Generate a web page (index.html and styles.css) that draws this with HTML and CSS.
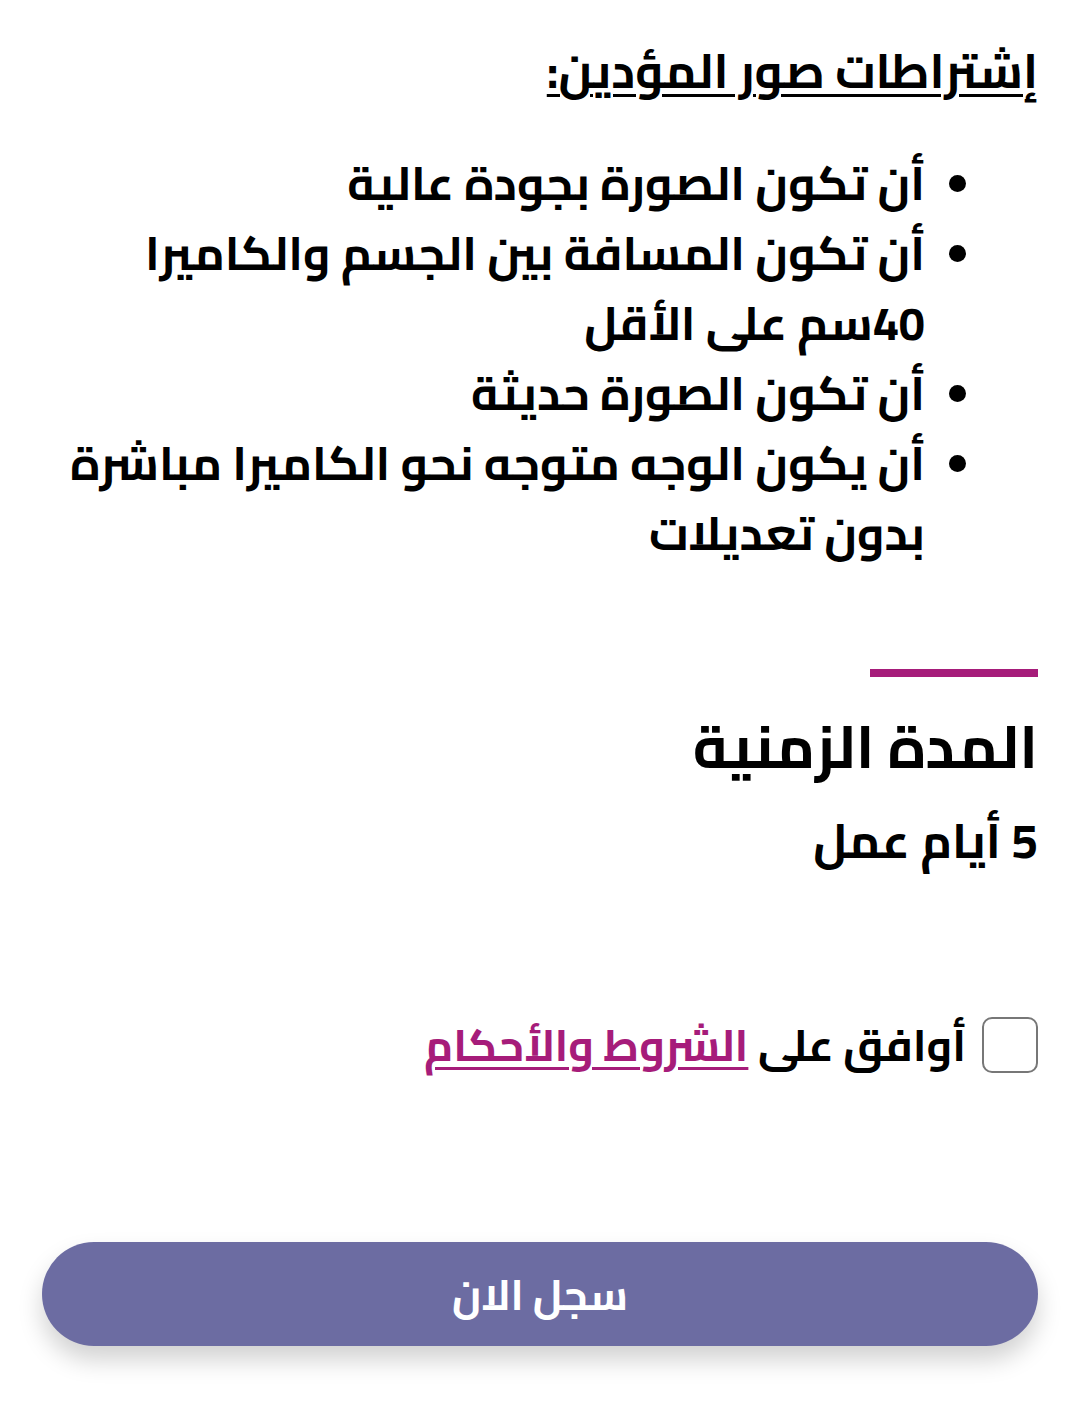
FILE: index.html
```html
<!DOCTYPE html>
<html lang="ar" dir="rtl">
  <head>
    <meta charset="UTF-8" />
    <meta name="viewport" content="width=device-width, initial-scale=1.0" />
    <title>التسجيل</title>
    <link rel="stylesheet" href="styles.css">
  </head>
  <body>
    <div class="container">
      <h3 class="rulesTitle">إشتراطات صور المؤدين:</h3>
      <ul class="rules">
        <li>أن تكون الصورة بجودة عالية</li>
        <li>أن تكون المسافة بين الجسم والكاميرا 40سم على الأقل</li>
        <li>أن تكون الصورة حديثة</li>
        <li>أن يكون الوجه متوجه نحو الكاميرا مباشرة بدون تعديلات</li>
      </ul>

      <div class="divider"></div>
      <h2 class="sectionTitle">المدة الزمنية</h2>
      <p class="duration">5 أيام عمل</p>

      <label class="agree">
        <span class="checkBox"></span>
        <span>أوافق على <a href="#">الشروط والأحكام</a></span>
      </label>

      <button class="registerBtn">سجل الان</button>
    </div>
  </body>
</html>
```

FILE: styles.css
```css
body {
  margin: 0;
  background: #ffffff;
  color: #000000;
  font-family: "Cairo", "DejaVu Sans", sans-serif;
}
.container {
  padding: 0 42px 60px;
}
.rulesTitle {
  margin: 0;
  padding-top: 40px;
  font-size: 48px;
  font-weight: 700;
  line-height: 60px;
  text-decoration: underline;
  text-decoration-thickness: 3px;
  text-underline-offset: 6px;
}
.rules {
  margin: 48px 0 0 0;
  padding: 0 113px 0 0;
  font-size: 47px;
  font-weight: 700;
  line-height: 70px;
}
.rules li::marker {
  font-size: 40px;
}
.divider {
  width: 168px;
  height: 8px;
  margin-top: 101px;
  background: #a61c7a;
}
.sectionTitle {
  margin: 34px 0 0 0;
  font-size: 60px;
  font-weight: 700;
  line-height: 70px;
}
.duration {
  margin: 29px 0 0 0;
  font-size: 48px;
  font-weight: 700;
  line-height: 60px;
}
.agree {
  display: flex;
  align-items: center;
  gap: 16px;
  margin-top: 134px;
  font-size: 44px;
  font-weight: 700;
}
.checkBox {
  width: 52px;
  height: 52px;
  border: 2px solid #777777;
  border-radius: 10px;
  flex-shrink: 0;
}
.agree a {
  color: #a61c7a;
  text-decoration: underline;
  text-decoration-thickness: 3px;
  text-underline-offset: 6px;
}
.registerBtn {
  display: block;
  width: 100%;
  height: 104px;
  margin-top: 156px;
  border: none;
  border-radius: 52px;
  background: #6c6ca2;
  color: #ffffff;
  font-family: inherit;
  font-size: 42px;
  font-weight: 700;
  box-shadow: 0 14px 24px rgba(0, 0, 0, 0.18);
}
```
